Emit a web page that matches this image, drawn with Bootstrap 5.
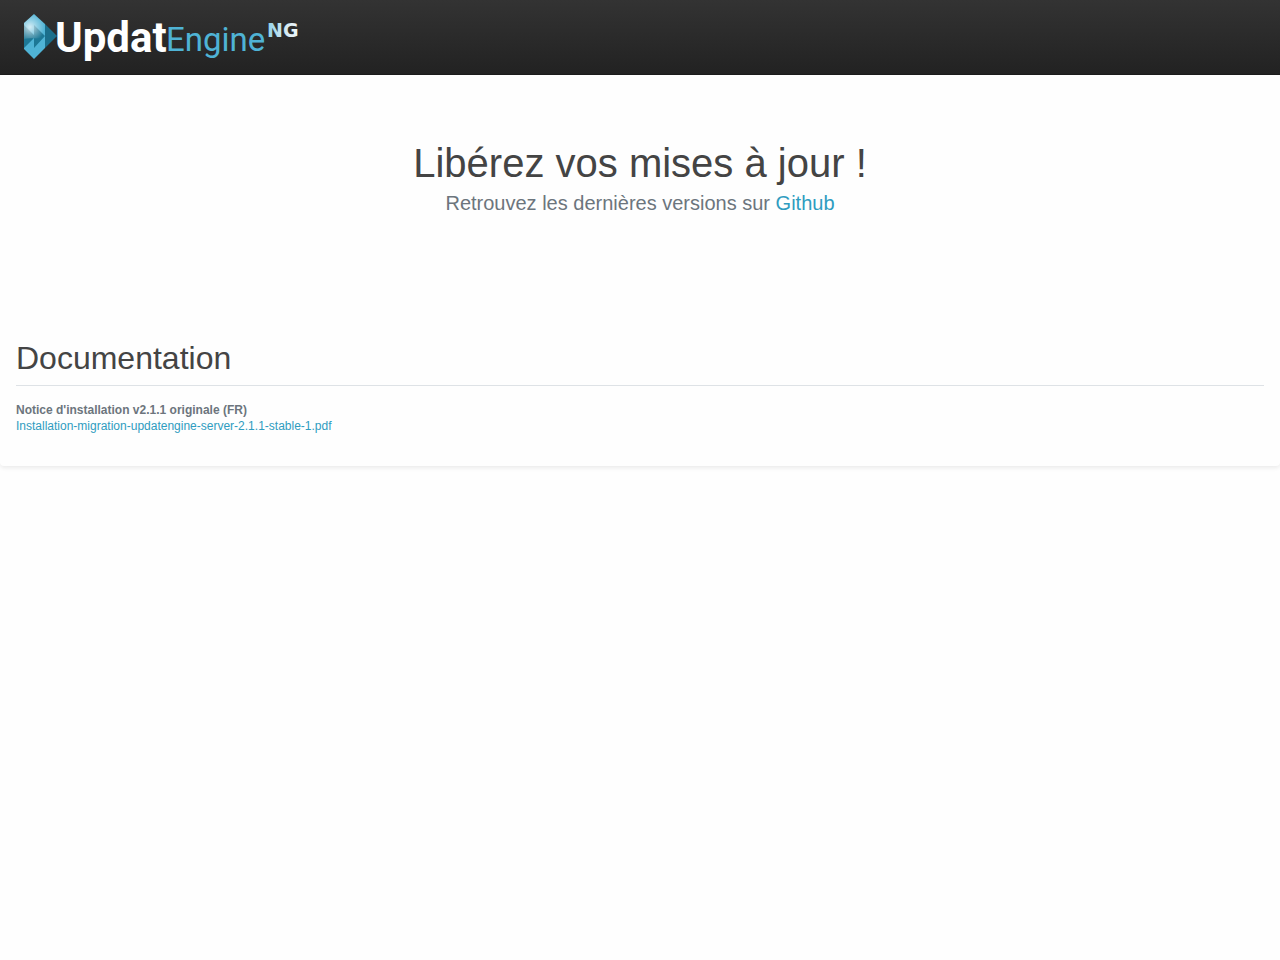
<!DOCTYPE html>
<html lang="fr">
<head>
<meta charset="utf-8">
<meta name="viewport" content="width=device-width, initial-scale=1">
<title>UpdatEngine NG</title>
<link rel="stylesheet" href="https://cdn.jsdelivr.net/npm/bootstrap@5.3.0/dist/css/bootstrap.min.css">
<style>
  body { font-family: "Liberation Sans", Arial, sans-serif; color: #444; background: #fefefe; }
  a { color: #2f9cc0; }
  .site-bar { height: 75px; background: linear-gradient(#333, #222); border-bottom: 1px solid #1c1c1c; }
  .sheet { border-radius: 4px; box-shadow: 0 2px 4px rgba(0, 0, 0, .08); background: #fefefe; }
  .hero { padding-top: 64px; padding-bottom: 64px; }
  .hero h1 { font-size: 40px; line-height: 48px; }
  .hero p { font-size: 20px; line-height: 32px; }
  .muted { color: #6c757d; }
  .docs { padding-top: 56px; padding-bottom: 32px; }
  .docs h2 { font-size: 32px; line-height: 38px; border-color: #dee2e6; }
  .docs p { font-size: 12px; line-height: 16px; }
</style>
</head>
<body class="min-vh-100">
<header class="navbar site-bar px-4 py-0 align-items-start">
  <a class="navbar-brand p-0 m-0" href="#" aria-label="UpdatEngine NG">
    <svg class="d-block" width="280" height="74" viewBox="24 0 280 74">
      <defs>
        <linearGradient id="ng" x1="0" x2="1"><stop offset="0" stop-color="#8fd0e8"/><stop offset=".6" stop-color="#d5eaf3"/><stop offset="1" stop-color="#f0f7fa"/></linearGradient>
        <radialGradient id="shine" gradientUnits="userSpaceOnUse" cx="30" cy="27" r="15"><stop offset="0" stop-color="#fff" stop-opacity=".75"/><stop offset=".5" stop-color="#fff" stop-opacity=".35"/><stop offset="1" stop-color="#fff" stop-opacity="0"/></radialGradient>
      </defs>
      <path d="M34 14 45 24V48L34 59 24 49V23Z" fill="#4fb3d5"/>
      <path d="M45 24 57 36 45 48Z" fill="#1b6f8c"/>
      <path d="M24 25 34 35V25L45 36 34 48V38L24 48Z" fill="#1d7896"/>
      <path d="M34 14 45 24V37C38 40 31 37 24 39V23Z" fill="url(#shine)"/>
      <text x="55" y="52" font-family="Roboto, sans-serif" font-weight="700" font-size="42" fill="#fff">Updat</text>
      <text x="166" y="51" font-family="Roboto, sans-serif" font-weight="400" font-size="33" fill="#4fb3d5">Engine</text>
      <text x="267" y="37" font-family="'DejaVu Sans', sans-serif" font-weight="700" font-size="19" fill="url(#ng)">NG</text>
    </svg>
  </a>
</header>
<main class="sheet position-relative">
  <section class="hero text-center px-3">
    <h1 class="fw-normal m-0">Libérez vos mises à jour !</h1>
    <p class="muted m-0">Retrouvez les dernières versions sur <a class="text-decoration-none" href="#">Github</a></p>
  </section>
  <section class="docs px-3">
    <h2 class="fw-normal m-0 pb-2 mb-3 border-bottom">Documentation</h2>
    <p class="muted m-0"><strong>Notice d'installation v2.1.1 originale (FR)</strong><br>
      <a class="text-decoration-none" href="#">Installation-migration-updatengine-server-2.1.1-stable-1.pdf</a></p>
  </section>
</main>
<script src="https://cdn.jsdelivr.net/npm/bootstrap@5.3.0/dist/js/bootstrap.bundle.min.js"></script>
</body>
</html>
